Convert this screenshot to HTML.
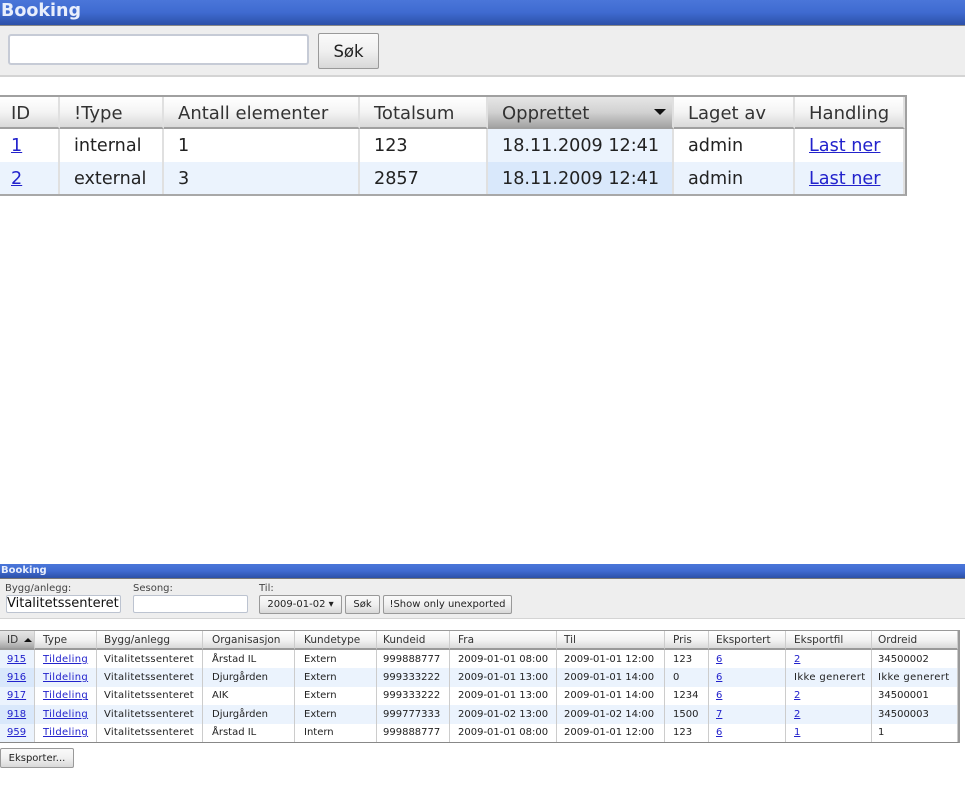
<!DOCTYPE html>
<html><head><meta charset="utf-8"><style>
html,body{margin:0;padding:0;background:#fff}
body{width:965px;height:811px;position:relative;overflow:hidden;font-family:"DejaVu Sans",sans-serif;color:#222}
.abs,.hd,.tb,table,.in,.btn,.l{position:absolute}
.hd{left:0;width:965px;background:linear-gradient(#4a76d9,#3f6ad0 50%,#2c50a8);color:#e8eefc;font-weight:bold;box-sizing:border-box}
.tb{left:0;width:965px;background:#eee;box-sizing:border-box;border-bottom:2px solid #d4d4d4}
.in{background:#fff;border:1px solid #bcc3d0;border-radius:3px;box-sizing:border-box}
.btn{background:linear-gradient(#fafafa,#f0f0f0 50%,#d8d8d8);border:1px solid #999;border-radius:2px;box-sizing:border-box;text-align:center;white-space:nowrap;color:#222}
.l{white-space:nowrap;color:#444}
table{border-collapse:separate;border-spacing:0;table-layout:fixed;left:0}
td,th{padding:0;white-space:nowrap;overflow:hidden;text-align:left;font-weight:normal;box-sizing:border-box}
a{color:#2222cc;text-decoration:underline}
th{background:linear-gradient(#fff,#f4f4f4 50%,#d9d9d9)}
th.s{background:linear-gradient(#e6e6e6,#d2d2d2 50%,#a4a4a4)}
tr.o td{background:#ebf3fd}
td.s{background:#ebf3fd}
tr.o td.s{background:#d9e8fb}
.t1{top:95px;width:907px;font-size:17.6px;border-top:2px solid #a0a0a0;border-bottom:2px solid #a8a8a8;border-right:2px solid #a0a0a0}
.t1 th{height:32px;font-size:18px;border-right:2px solid #e0e0e0;border-bottom:2px solid #a0a0a0;padding:2px 0 0 14px;color:#333}
.t1 td{height:32.5px;border-right:2px solid #e0e0e0;padding:2px 0 0 14px}
.t2{top:630px;width:958px;font-size:10px;border-top:1px solid #999;border-bottom:1px solid #888;border-right:2px solid #999}
.t2 th{height:19px;font-size:10.5px;border-right:1px solid #ccc;border-bottom:2px solid #999;padding-left:7px;color:#333}
.t2 td{height:18.4px;border-right:1px solid #ccc;padding-left:7px}
.t2 tr>*:nth-child(2){padding-left:8px}
.t2 tr>*:nth-child(4),.t2 tr>*:nth-child(5){padding-left:9px}
.t2 tr>*:nth-child(6){padding-left:6px}
.t2 tr>*:nth-child(7),.t2 tr>*:nth-child(9),.t2 tr>*:nth-child(11){padding-left:8px}
.t2 tr>*:nth-child(12){padding-left:6px}
.v{letter-spacing:.22px}
.t{letter-spacing:.33px}
.g{letter-spacing:.38px}
</style></head><body>
<div class="hd" style="top:0;height:26px;font-size:17.5px;line-height:23px;padding-left:1px;border-bottom:1px solid #888">Booking</div>
<div class="tb" style="top:26px;height:51px"></div>
<div class="in" style="left:8px;top:34px;width:301px;height:31px;border-width:2px;border-color:#c6cbd6"></div>
<div class="btn" style="left:318px;top:33px;width:61px;height:36px;font-size:16.5px;line-height:36px">Søk</div>

<table class="t1">
<colgroup><col style="width:60px"><col style="width:104px"><col style="width:196px"><col style="width:128px"><col style="width:186px"><col style="width:121px"><col style="width:110px"></colgroup>
<tr><th style="padding-left:11px">ID</th><th>!Type</th><th>Antall elementer</th><th>Totalsum</th><th class="s" style="position:relative">Opprettet<svg style="position:absolute;left:166px;top:12px" width="12" height="7"><path d="M0 0H12L6 6Z" fill="#111"/></svg></th><th>Laget av</th><th>Handling</th></tr>
<tr><td style="padding-left:11px"><a href="#">1</a></td><td>internal</td><td>1</td><td>123</td><td class="s">18.11.2009 12:41</td><td>admin</td><td><a href="#">Last ner</a></td></tr>
<tr class="o"><td style="padding-left:11px"><a href="#">2</a></td><td>external</td><td>3</td><td>2857</td><td class="s">18.11.2009 12:41</td><td>admin</td><td><a href="#">Last ner</a></td></tr>
</table>

<div class="hd" style="top:564px;height:15px;font-size:10px;line-height:13px;padding-left:1px;border-bottom:1px solid #777">Booking</div>
<div class="tb" style="top:579px;height:40px;border-bottom-width:1px"></div>
<div class="l" style="left:5px;top:583px;font-size:10px;line-height:12px">Bygg/anlegg:</div>
<div class="l" style="left:133px;top:583px;font-size:10px;line-height:12px">Sesong:</div>
<div class="l" style="left:259px;top:583px;font-size:10px;line-height:12px">Til:</div>
<div class="in" style="left:6px;top:595px;width:115px;height:18px;font-size:13px;line-height:16px;color:#111;white-space:nowrap;overflow:hidden;border-radius:2px">Vitalitetssenteret</div>
<div class="in" style="left:133px;top:595px;width:115px;height:18px;border-radius:2px"></div>
<div class="btn" style="left:259px;top:595px;width:83px;height:19px;font-size:10px;line-height:17px">2009-01-02 ▾</div>
<div class="btn" style="left:345px;top:595px;width:35px;height:19px;font-size:10px;line-height:17px">Søk</div>
<div class="btn" style="left:383px;top:595px;width:129px;height:19px;font-size:10px;line-height:17px">!Show only unexported</div>

<table class="t2">
<colgroup><col style="width:35px"><col style="width:62px"><col style="width:106px"><col style="width:92px"><col style="width:82px"><col style="width:73px"><col style="width:107px"><col style="width:108px"><col style="width:44px"><col style="width:77px"><col style="width:86px"><col style="width:86px"></colgroup>
<tr><th class="s" style="position:relative">ID<svg style="position:absolute;left:24px;top:7px" width="8" height="5"><path d="M0 4H8L4 0Z" fill="#111"/></svg></th><th>Type</th><th>Bygg/anlegg</th><th>Organisasjon</th><th>Kundetype</th><th>Kundeid</th><th>Fra</th><th>Til</th><th>Pris</th><th>Eksportert</th><th>Eksportfil</th><th>Ordreid</th></tr>
<tr><td class="s"><a href="#">915</a></td><td><a class="t" href="#">Tildeling</a></td><td class="v">Vitalitetssenteret</td><td>Årstad IL</td><td>Extern</td><td>999888777</td><td>2009-01-01 08:00</td><td>2009-01-01 12:00</td><td>123</td><td><a href="#">6</a></td><td><a href="#">2</a></td><td>34500002</td></tr>
<tr class="o"><td class="s"><a href="#">916</a></td><td><a class="t" href="#">Tildeling</a></td><td class="v">Vitalitetssenteret</td><td>Djurgården</td><td>Extern</td><td>999333222</td><td>2009-01-01 13:00</td><td>2009-01-01 14:00</td><td>0</td><td><a href="#">6</a></td><td class="g">Ikke generert</td><td class="g">Ikke generert</td></tr>
<tr><td class="s"><a href="#">917</a></td><td><a class="t" href="#">Tildeling</a></td><td class="v">Vitalitetssenteret</td><td>AIK</td><td>Extern</td><td>999333222</td><td>2009-01-01 13:00</td><td>2009-01-01 14:00</td><td>1234</td><td><a href="#">6</a></td><td><a href="#">2</a></td><td>34500001</td></tr>
<tr class="o"><td class="s"><a href="#">918</a></td><td><a class="t" href="#">Tildeling</a></td><td class="v">Vitalitetssenteret</td><td>Djurgården</td><td>Extern</td><td>999777333</td><td>2009-01-02 13:00</td><td>2009-01-02 14:00</td><td>1500</td><td><a href="#">7</a></td><td><a href="#">2</a></td><td>34500003</td></tr>
<tr><td class="s"><a href="#">959</a></td><td><a class="t" href="#">Tildeling</a></td><td class="v">Vitalitetssenteret</td><td>Årstad IL</td><td>Intern</td><td>999888777</td><td>2009-01-01 08:00</td><td>2009-01-01 12:00</td><td>123</td><td><a href="#">6</a></td><td><a href="#">1</a></td><td>1</td></tr>
</table>
<div class="btn" style="left:0;top:748px;width:74px;height:20px;font-size:10px;line-height:19px">Eksporter...</div>
</body></html>
